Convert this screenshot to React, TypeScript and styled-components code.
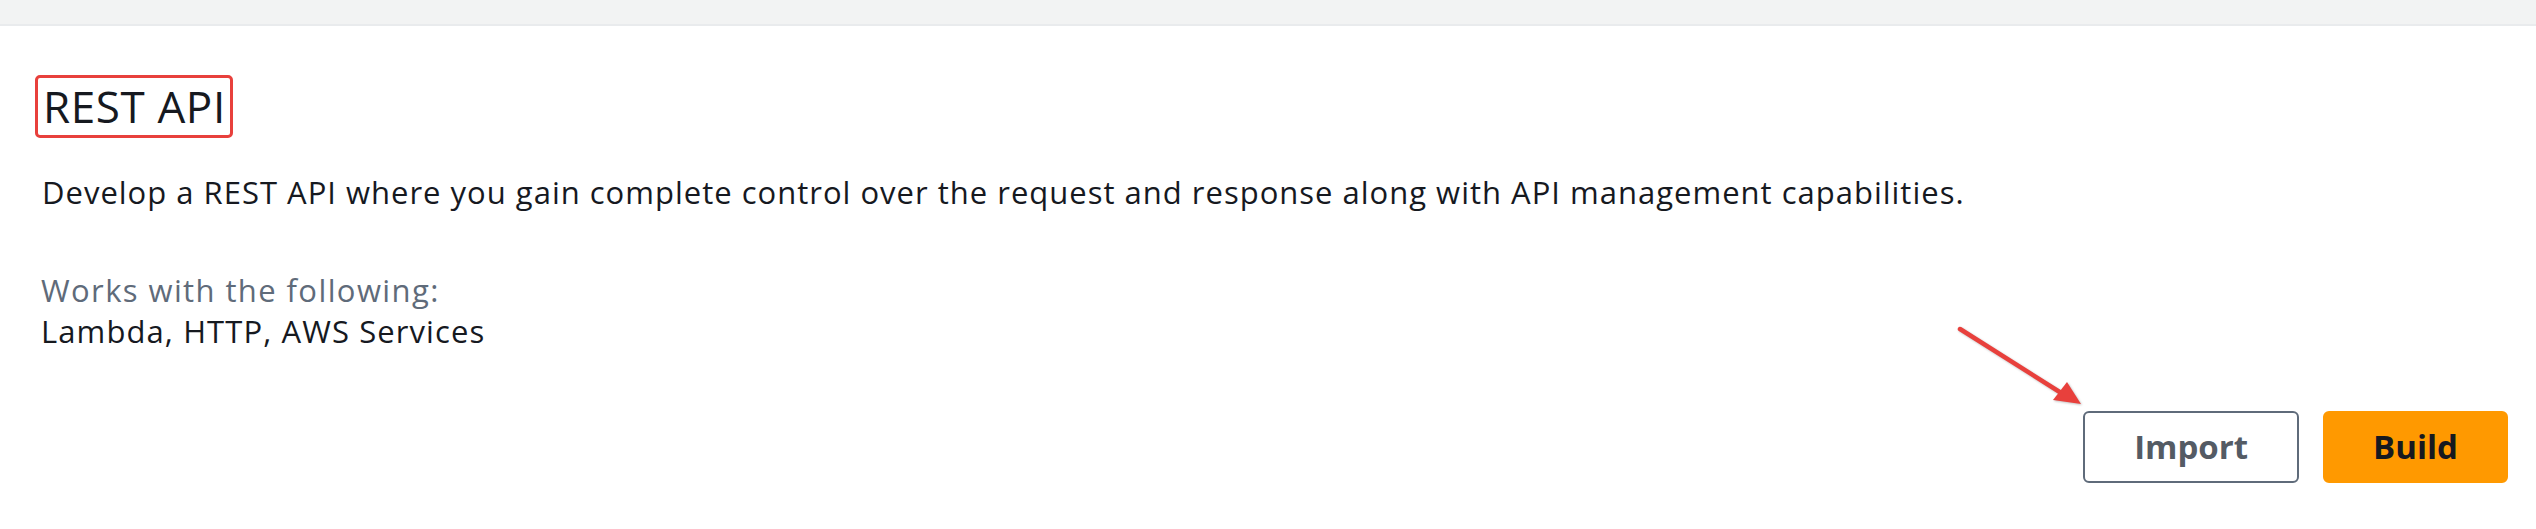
import React from "react";
import styled, { createGlobalStyle } from "styled-components";

const Global = createGlobalStyle`
  html, body { margin: 0; padding: 0; background: #ffffff; }
  body { font-family: "Open Sans", "Noto Sans", Arial, sans-serif; color: #16191f; }
  #root { position: relative; min-height: 529px; }
`;

const TopBar = styled.div`
  height: 24px;
  background: #f2f3f3;
  border-bottom: 2px solid #e9ebed;
`;

const Content = styled.section`
  padding: 49px 28px 0 35px;
`;

const Heading = styled.h2`
  display: inline-block;
  margin: 0;
  padding: 0 4px 0 5px;
  border: 3px solid #e8403c;
  border-radius: 5px;
  font-size: 44px;
  font-weight: 400;
  letter-spacing: 0.6px;
  line-height: 57px;
  color: #16191f;
`;

const Description = styled.p`
  margin: 34px 0 0 7px;
  font-size: 31px;
  letter-spacing: 1px;
  line-height: 40px;
  color: #16191f;
`;

const Label = styled.div<{ $muted?: boolean }>`
  margin-left: 6px;
  font-size: 31px;
  letter-spacing: ${(p) => (p.$muted ? "1.4px" : "1.1px")};
  line-height: 41px;
  color: ${(p) => (p.$muted ? "#5f6b7a" : "#16191f")};
`;

const Works = styled.div`
  margin-top: 58px;
`;

const Actions = styled.div`
  display: flex;
  justify-content: flex-end;
  gap: 24px;
  margin-top: 59px;
`;

const Button = styled.button<{ $primary?: boolean }>`
  box-sizing: border-box;
  height: 72px;
  padding: 0 ${(p) => (p.$primary ? "48px" : "49px")};
  border: 2px solid ${(p) => (p.$primary ? "#ff9900" : "#5f6b7a")};
  border-radius: 6px;
  background: ${(p) => (p.$primary ? "#ff9900" : "#ffffff")};
  color: ${(p) => (p.$primary ? "#16191f" : "#545b64")};
  font-family: "Open Sans", "Noto Sans", Arial, sans-serif;
  font-size: 33px;
  font-weight: 700;
  line-height: 68px;
  cursor: pointer;
`;

const Arrow = styled.svg`
  position: absolute;
  left: 1950px;
  top: 320px;
  width: 140px;
  height: 100px;
  overflow: visible;
  filter: drop-shadow(1px 1px 1px rgba(0, 0, 0, 0.25));
`;

export default function App() {
  return (
    <>
      <Global />
      <TopBar />
      <Content>
        <Heading>REST API</Heading>
        <Description>
          Develop a REST API where you gain complete control over the request and response along
          with API management capabilities.
        </Description>
        <Works>
          <Label $muted>Works with the following:</Label>
          <Label>Lambda, HTTP, AWS Services</Label>
        </Works>
        <Actions>
          <Button>Import</Button>
          <Button $primary>Build</Button>
        </Actions>
      </Content>
      <Arrow viewBox="0 0 140 100">
        <line x1="10" y1="9" x2="116" y2="76" stroke="#e8403c" strokeWidth="4.5" strokeLinecap="round" />
        <polygon points="131,84 103,80 117,62" fill="#e8403c" />
      </Arrow>
    </>
  );
}
